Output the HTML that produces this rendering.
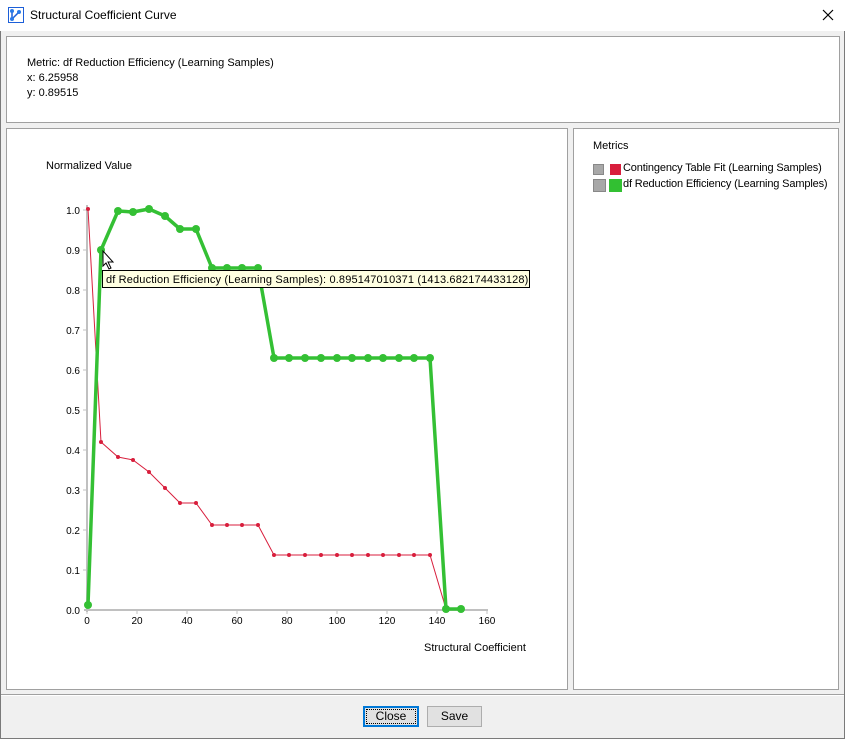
<!DOCTYPE html>
<html><head><meta charset="utf-8"><style>
*{margin:0;padding:0;box-sizing:border-box}
body{width:845px;height:739px;background:#f0f0f0;font-family:"Liberation Sans",sans-serif;font-size:11px;color:#000;position:relative;overflow:hidden}
.win{position:absolute;left:0;top:0;width:845px;height:739px;border:1px solid #7a7a7a;border-top:none}
.title{position:absolute;left:0;top:0;width:845px;height:31px;background:#fff}
.title span{position:absolute;left:30px;top:8px;font-size:12px}
.panel{position:absolute;background:#fff;border:1px solid #a0a0a0}
.btn{position:absolute;top:706px;height:21px;background:#e1e1e1;border:1px solid #adadad;font-size:12px;text-align:center;line-height:19px}
.lg{position:absolute;left:49px;letter-spacing:-0.15px}
</style></head><body>
<div class="win"></div>
<div class="title">
<svg style="position:absolute;left:8px;top:7px" width="16" height="16" viewBox="0 0 16 16"><rect x="0.5" y="0.5" width="15" height="15" fill="#fff" stroke="#1c5fd8"/><path d="M4 12 L4 5 M4 12 L11 5" stroke="#1c5fd8" stroke-width="1.5" fill="none"/><circle cx="4" cy="4" r="2" fill="#2a7ae8"/><circle cx="11" cy="5" r="2" fill="#2a7ae8"/><circle cx="4" cy="12" r="2" fill="#2a7ae8"/></svg>
<span>Structural Coefficient Curve</span>
<svg style="position:absolute;left:822px;top:9px" width="12" height="12"><path d="M1 1L11 11M11 1L1 11" stroke="#000" stroke-width="1.2"/></svg>
</div>
<div class="panel" style="left:6px;top:36px;width:834px;height:87px">
<div style="position:absolute;left:20px;top:19px;line-height:15px">Metric: df Reduction Efficiency (Learning Samples)<br>x: 6.25958<br>y: 0.89515</div>
</div>
<div class="panel" style="left:6px;top:128px;width:562px;height:562px"></div>
<div class="panel" style="left:573px;top:128px;width:266px;height:562px">
<div style="position:absolute;left:19px;top:11px">Metrics</div>
<div style="position:absolute;left:19px;top:35px;width:11px;height:11px;background:#a8a8a8;border:1px solid #888"></div>
<div style="position:absolute;left:36px;top:35px;width:11px;height:11px;background:#d81e3c"></div>
<div class="lg" style="top:33px">Contingency Table Fit (Learning Samples)</div>
<div style="position:absolute;left:19px;top:50px;width:13px;height:13px;background:#a8a8a8;border:1px solid #888"></div>
<div style="position:absolute;left:35px;top:50px;width:13px;height:13px;background:#32c032"></div>
<div class="lg" style="top:49px">df Reduction Efficiency (Learning Samples)</div>
</div>
<svg style="position:absolute;left:0;top:0" width="845" height="739" font-family="Liberation Sans" font-size="10">
<text x="46" y="169" font-size="11">Normalized Value</text>
<text x="424" y="651" font-size="11">Structural Coefficient</text>
<line x1="87" y1="205" x2="87" y2="612" stroke="#c0c0c0" stroke-width="2"/>
<line x1="84" y1="610" x2="488" y2="610" stroke="#c0c0c0" stroke-width="2"/>
<g stroke="#c0c0c0" stroke-width="1">
<line x1="83" y1="210" x2="87" y2="210"/><line x1="83" y1="250" x2="87" y2="250"/><line x1="83" y1="290" x2="87" y2="290"/><line x1="83" y1="330" x2="87" y2="330"/><line x1="83" y1="370" x2="87" y2="370"/><line x1="83" y1="410" x2="87" y2="410"/><line x1="83" y1="450" x2="87" y2="450"/><line x1="83" y1="490" x2="87" y2="490"/><line x1="83" y1="530" x2="87" y2="530"/><line x1="83" y1="570" x2="87" y2="570"/>
<line x1="87" y1="610" x2="87" y2="614"/><line x1="137" y1="610" x2="137" y2="614"/><line x1="187" y1="610" x2="187" y2="614"/><line x1="237" y1="610" x2="237" y2="614"/><line x1="287" y1="610" x2="287" y2="614"/><line x1="337" y1="610" x2="337" y2="614"/><line x1="387" y1="610" x2="387" y2="614"/><line x1="437" y1="610" x2="437" y2="614"/><line x1="487" y1="610" x2="487" y2="614"/>
</g>
<g text-anchor="end">
<text x="80" y="214">1.0</text><text x="80" y="254">0.9</text><text x="80" y="294">0.8</text><text x="80" y="334">0.7</text><text x="80" y="374">0.6</text><text x="80" y="414">0.5</text><text x="80" y="454">0.4</text><text x="80" y="494">0.3</text><text x="80" y="534">0.2</text><text x="80" y="574">0.1</text><text x="80" y="614">0.0</text>
</g>
<g text-anchor="middle">
<text x="87" y="624">0</text><text x="137" y="624">20</text><text x="187" y="624">40</text><text x="237" y="624">60</text><text x="287" y="624">80</text><text x="337" y="624">100</text><text x="387" y="624">120</text><text x="437" y="624">140</text><text x="487" y="624">160</text>
</g>
<polyline fill="none" stroke="#d81e3c" stroke-width="1" points="88,209 101,442 118,457 133,460 149,472 165,488 180,503 196,503 212,525 227,525 242,525 258,525 274,555 289,555 305,555 321,555 337,555 352,555 368,555 383,555 399,555 414,555 430,555 446,609"/>
<g fill="#d81e3c">
<circle cx="88" cy="209" r="2"/><circle cx="101" cy="442" r="2"/><circle cx="118" cy="457" r="2"/><circle cx="133" cy="460" r="2"/><circle cx="149" cy="472" r="2"/><circle cx="165" cy="488" r="2"/><circle cx="180" cy="503" r="2"/><circle cx="196" cy="503" r="2"/><circle cx="212" cy="525" r="2"/><circle cx="227" cy="525" r="2"/><circle cx="242" cy="525" r="2"/><circle cx="258" cy="525" r="2"/><circle cx="274" cy="555" r="2"/><circle cx="289" cy="555" r="2"/><circle cx="305" cy="555" r="2"/><circle cx="321" cy="555" r="2"/><circle cx="337" cy="555" r="2"/><circle cx="352" cy="555" r="2"/><circle cx="368" cy="555" r="2"/><circle cx="383" cy="555" r="2"/><circle cx="399" cy="555" r="2"/><circle cx="414" cy="555" r="2"/><circle cx="430" cy="555" r="2"/>
</g>
<polyline fill="none" stroke="#34c034" stroke-width="3.5" stroke-linejoin="round" points="88,605 101,250 118,211 133,212 149,209 165,216 180,229 196,229 212,268 227,268 242,268 258,268 274,358 289,358 305,358 321,358 337,358 352,358 368,358 383,358 399,358 414,358 430,358 446,609 461,609"/>
<g fill="#34c034">
<circle cx="88" cy="605" r="4"/><circle cx="101" cy="250" r="4"/><circle cx="118" cy="211" r="4"/><circle cx="133" cy="212" r="4"/><circle cx="149" cy="209" r="4"/><circle cx="165" cy="216" r="4"/><circle cx="180" cy="229" r="4"/><circle cx="196" cy="229" r="4"/><circle cx="212" cy="268" r="4"/><circle cx="227" cy="268" r="4"/><circle cx="242" cy="268" r="4"/><circle cx="258" cy="268" r="4"/><circle cx="274" cy="358" r="4"/><circle cx="289" cy="358" r="4"/><circle cx="305" cy="358" r="4"/><circle cx="321" cy="358" r="4"/><circle cx="337" cy="358" r="4"/><circle cx="352" cy="358" r="4"/><circle cx="368" cy="358" r="4"/><circle cx="383" cy="358" r="4"/><circle cx="399" cy="358" r="4"/><circle cx="414" cy="358" r="4"/><circle cx="430" cy="358" r="4"/><circle cx="446" cy="609" r="4"/><circle cx="461" cy="609" r="4"/>
</g>
<rect x="102.5" y="270.5" width="427" height="17" fill="#ffffe1" stroke="#000"/>
<text x="106" y="283" font-size="11" letter-spacing="0.15">df Reduction Efficiency (Learning Samples): 0.895147010371 (1413.682174433128)</text>
<path d="M103 251 L103 266 L106 263 L109 269 L111 268 L108 262 L113 262 Z" fill="#fff" stroke="#000" stroke-width="1"/>
</svg>
<div style="position:absolute;left:1px;top:694px;width:843px;height:1px;background:#a0a0a0"></div>
<div style="position:absolute;left:1px;top:695px;width:843px;height:1px;background:#fff"></div>
<div class="btn" style="left:363px;width:56px;border:2px solid #0078d7;line-height:17px"><div style="position:absolute;inset:1px;border:1px dotted #000"></div>Close</div>
<div class="btn" style="left:427px;width:55px">Save</div>
</body></html>
